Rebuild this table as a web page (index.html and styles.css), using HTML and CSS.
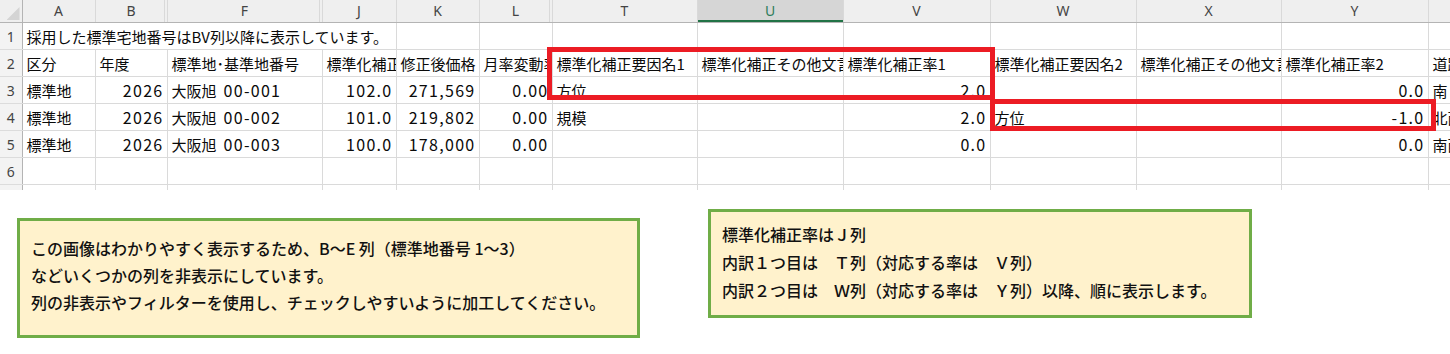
FILE: index.html
```html
<!DOCTYPE html>
<html lang="ja">
<head>
<meta charset="utf-8">
<title>標準化補正</title>
<link rel="stylesheet" href="styles.css">
</head>
<body>
<div class="sheet">
  <table class="grid">
    <colgroup>
      <col class="w-rh"><col class="w-a"><col class="w-b"><col class="w-f"><col class="w-j"><col class="w-k"><col class="w-l">
      <col class="w-t"><col class="w-u"><col class="w-v"><col class="w-w"><col class="w-x"><col class="w-y"><col class="w-z">
    </colgroup>
    <thead>
      <tr class="hdr">
        <th class="corner"></th>
        <th>A</th><th class="hid">B</th><th class="hid">F</th><th>J</th><th>K</th><th class="hid">L</th>
        <th>T</th><th class="sel">U</th><th>V</th><th>W</th><th>X</th><th>Y</th><th></th>
      </tr>
    </thead>
    <tbody>
      <tr>
        <th class="rh">1</th>
        <td colspan="4" class="over">採用した標準宅地番号はBV列以降に表示しています。</td>
        <td></td><td></td><td></td><td></td><td></td><td></td><td></td><td></td><td></td>
      </tr>
      <tr>
        <th class="rh">2</th>
        <td>区分</td><td>年度</td><td>標準地･基準地番号</td><td>標準化補正率</td><td>修正後価格</td><td>月率変動率</td>
        <td>標準化補正要因名1</td><td>標準化補正その他文言1</td><td>標準化補正率1</td>
        <td>標準化補正要因名2</td><td>標準化補正その他文言2</td><td>標準化補正率2</td><td>道路方位</td>
      </tr>
      <tr>
        <th class="rh">3</th>
        <td>標準地</td><td class="num">2026</td><td>大阪旭<span class="digits">00-001</span></td><td class="num">102.0</td><td class="num">271,569</td><td class="num">0.00</td>
        <td>方位</td><td></td><td class="num">2.0</td>
        <td></td><td></td><td class="num">0.0</td><td>南</td>
      </tr>
      <tr>
        <th class="rh">4</th>
        <td>標準地</td><td class="num">2026</td><td>大阪旭<span class="digits">00-002</span></td><td class="num">101.0</td><td class="num">219,802</td><td class="num">0.00</td>
        <td>規模</td><td></td><td class="num">2.0</td>
        <td>方位</td><td></td><td class="num">-1.0</td><td>北西</td>
      </tr>
      <tr>
        <th class="rh">5</th>
        <td>標準地</td><td class="num">2026</td><td>大阪旭<span class="digits">00-003</span></td><td class="num">100.0</td><td class="num">178,000</td><td class="num">0.00</td>
        <td></td><td></td><td class="num">0.0</td>
        <td></td><td></td><td class="num">0.0</td><td>南西</td>
      </tr>
      <tr>
        <th class="rh">6</th>
        <td></td><td></td><td></td><td></td><td></td><td></td><td></td><td></td><td></td><td></td><td></td><td></td><td></td>
      </tr>
      <tr>
        <th class="rh">7</th>
        <td></td><td></td><td></td><td></td><td></td><td></td><td></td><td></td><td></td><td></td><td></td><td></td><td></td>
      </tr>
    </tbody>
  </table>
  <div class="mark mark-1"></div>
  <div class="mark mark-2"></div>
</div>
<div class="notes">
  <div class="note note-left">
    <p>この画像はわかりやすく表示するため、B～E 列（標準地番号 1～3）</p>
    <p>などいくつかの列を非表示にしています。</p>
    <p>列の非表示やフィルターを使用し、チェックしやすいように加工してください。</p>
  </div>
  <div class="note note-right">
    <p>標準化補正率はＪ列</p>
    <p>内訳１つ目は　Ｔ列（対応する率は　Ｖ列）</p>
    <p>内訳２つ目は　Ｗ列（対応する率は　Ｙ列）以降、順に表示します。</p>
  </div>
</div>
</body>
</html>
```
FILE: styles.css
```css
html, body {
  margin: 0;
  padding: 0;
  background: #ffffff;
}

body {
  width: 1450px;
  font-family: "Noto Sans CJK JP", "Noto Sans", sans-serif;
  color: #000000;
}

.sheet {
  position: relative;
  width: 1450px;
  height: 190px;
  overflow: hidden;
}

.grid {
  border-collapse: collapse;
  table-layout: fixed;
  width: 1490px;
}

.w-rh { width: 22px; }
.w-a { width: 73px; }
.w-b { width: 72px; }
.w-f { width: 155px; }
.w-j { width: 74px; }
.w-k { width: 83px; }
.w-l { width: 73px; }
.w-t { width: 145px; }
.w-u { width: 146px; }
.w-v { width: 147px; }
.w-w { width: 146px; }
.w-x { width: 145px; }
.w-y { width: 147px; }
.w-z { width: 62px; }

.hdr th {
  height: 22px;
  padding: 0;
  background: #efefef;
  border-left: 1px solid #d9d9d9;
  border-right: 1px solid #d9d9d9;
  border-bottom: 1px solid #b4b4b4;
  font-family: "Noto Sans", "Open Sans", sans-serif;
  font-weight: 400;
  font-size: 14px;
  color: #444444;
  text-align: center;
  vertical-align: middle;
  line-height: 22px;
}

.hdr th.hid {
  box-shadow: inset -2px 0 0 #efefef, inset -3px 0 0 #d9d9d9;
}

.hdr th.sel {
  background: #d6d6d6;
  color: #2e7d5b;
  box-shadow: inset 0 -2px 0 #217346;
}

.hdr th.corner {
  position: relative;
  border-left: none;
  border-right: 1px solid #b4b4b4;
}

.hdr th.corner::after {
  content: "";
  position: absolute;
  right: 2px;
  bottom: 2px;
  width: 13px;
  height: 13px;
  background: #d4d4d4;
  clip-path: polygon(100% 0, 100% 100%, 0 100%);
}

.grid tbody tr {
  height: 27px;
}

.grid .rh {
  padding: 0;
  background: #f3f3f3;
  border-right: 1px solid #b4b4b4;
  border-bottom: 1px solid #dcdcdc;
  font-family: "Noto Sans", "Open Sans", sans-serif;
  font-weight: 400;
  font-size: 14px;
  color: #444444;
  text-align: center;
  vertical-align: middle;
}

.grid td {
  border: 1px solid #dadada;
  padding: 1px 4px 0 4px;
  font-size: 15px;
  line-height: 25px;
  white-space: nowrap;
  overflow: hidden;
  text-overflow: clip;
  vertical-align: middle;
  text-align: left;
  color: #0a0a0a;
}

.grid td.over {
  overflow: visible;
}

.grid td.num {
  text-align: right;
  font-size: 16px;
  letter-spacing: 1.3px;
  padding-right: 3px;
}

.digits {
  margin-left: 7px;
  font-size: 16px;
  letter-spacing: 1.3px;
}

.mark {
  position: absolute;
  border: 5px solid #ec1c24;
  box-sizing: border-box;
}

.mark-1 {
  left: 547px;
  top: 47px;
  width: 448px;
  height: 53px;
}

.mark-2 {
  left: 990px;
  top: 99px;
  width: 446px;
  height: 32px;
}

.notes {
  display: flex;
  align-items: flex-start;
  padding-left: 17px;
  gap: 68px;
}

.note {
  background: #fff2cc;
  border: 3px solid #70ad47;
  box-sizing: border-box;
  font-size: 16px;
  font-weight: 500;
  color: #111111;
}

.note p {
  margin: 0;
  white-space: nowrap;
}

.note-left {
  margin-top: 28px;
  width: 623px;
  height: 120px;
  padding: 14px 11px 0 11px;
  line-height: 27px;
}

.note-right {
  margin-top: 19px;
  width: 544px;
  height: 109px;
  padding: 8px 11px 0 11px;
  line-height: 28px;
}
```
